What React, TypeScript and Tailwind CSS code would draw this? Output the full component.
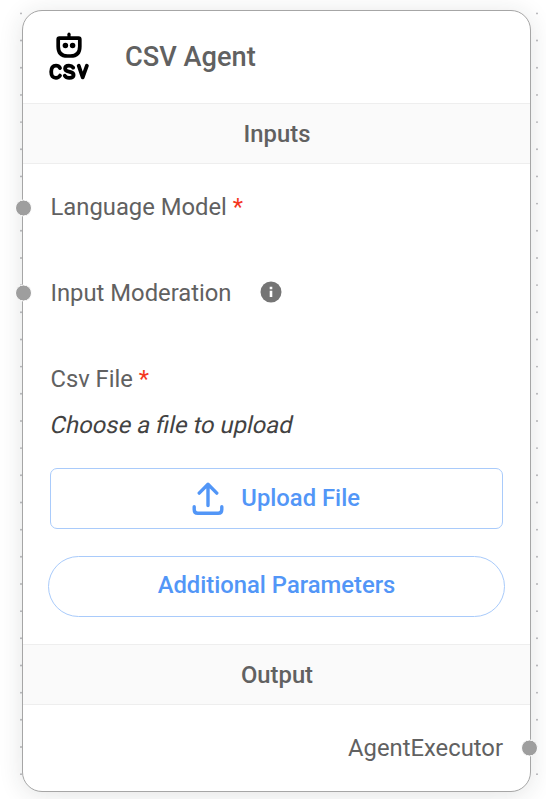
import React from "react";

const dotColumn = Array.from({ length: 29 }, (_, i) => i);

function Dots({ x }: { x: number }) {
  return (
    <g fill="#b4b4b8">
      {dotColumn.map((i) => (
        <circle key={i} cx={x} cy={13.4 + i * 27.17} r={0.95} />
      ))}
    </g>
  );
}

function Handle({ side }: { side: "left" | "right" }) {
  return (
    <span
      className={
        "absolute top-1/2 h-[17px] w-[17px] -translate-y-1/2 rounded-full border border-white bg-[#9e9e9e] " +
        (side === "left" ? "-left-[8px]" : "-right-[8px]")
      }
    />
  );
}

function SectionTitle({ children }: { children: React.ReactNode }) {
  return (
    <div className="flex h-[61px] shrink-0 items-center justify-center border-y border-[#eeeeee] bg-[#fafafa] pl-px text-[23.8px] font-medium text-[#616161]">
      {children}
    </div>
  );
}

function RobotCsvIcon() {
  return (
    <svg className="mb-[2px] h-[48px] w-[42px]" viewBox="0 0 42 48" fill="none" stroke="#000" strokeLinecap="round" strokeLinejoin="round">
      <path d="M21 2.2V6" strokeWidth="3.2" />
      <path d="M11.4 6.2H30.6Q31.8 6.2 31.8 7.4V14.5Q31.8 24 22.6 24H19.4Q10.2 24 10.2 14.5V7.4Q10.2 6.2 11.4 6.2Z" strokeWidth="3.7" />
      <circle cx="17.4" cy="13.6" r="2.75" fill="#000" stroke="none" />
      <circle cx="24.6" cy="13.6" r="2.75" fill="#000" stroke="none" />
      <path d="M12 36Q10.7 33.7 8 33.7Q3.2 33.7 3.2 39.8T8 45.8Q10.7 45.8 12 43.6" strokeWidth="3.8" />
      <path d="M25.2 35.6Q23.8 33.7 21 33.7Q17.1 33.7 17.1 36.5Q17.1 38.9 20.9 39.6Q25.6 40.4 25.6 42.9Q25.6 45.8 21.2 45.8Q18.1 45.8 16.8 43.7" strokeWidth="3.8" />
      <path d="M30.7 33.7L34.7 45.4L38.9 33.7" strokeWidth="3.8" />
    </svg>
  );
}

function InfoIcon() {
  return (
    <svg className="mb-[3px] ml-[27.5px] h-[24px] w-[24px]" viewBox="0 0 24 24">
      <circle cx="12" cy="12" r="10.5" fill="#757575" />
      <path d="M10.7 10.7h2.6v6.3h-2.6zM10.7 6.8h2.6v2.4h-2.6z" fill="#fff" />
    </svg>
  );
}

function UploadIcon() {
  return (
    <svg className="h-[34px] w-[32px]" viewBox="0 0 32 34" fill="none" stroke="#5296f7" strokeWidth="3.4" strokeLinecap="round" strokeLinejoin="round">
      <path d="M2.2 24.8V27.5Q2.2 31.3 5.8 31.3H26.2Q29.8 31.3 29.8 27.5V24.8" />
      <path d="M7.2 11.1L16 2.3L24.8 11.1M16 2.3V23.5" />
    </svg>
  );
}

export default function App() {
  return (
    <div className="relative h-[799px] w-[546px] overflow-hidden bg-white px-[22px] pt-[10px] font-['Roboto',sans-serif] text-[23.8px] leading-[34px] text-[#616161]">
      <svg className="absolute inset-0 h-full w-full" viewBox="0 0 546 799">
        <Dots x={21} />
        <Dots x={537} />
      </svg>
      <div className="relative flex h-[782px] w-[509px] flex-col rounded-[20px] border border-[#a6a6a6] bg-white shadow-[0_3px_24px_rgba(32,40,45,0.12)]">
        <div className="flex h-[92px] shrink-0 items-center pl-[25px]">
          <RobotCsvIcon />
          <h1 className="ml-[35px] text-[27.2px] font-medium">CSV Agent</h1>
        </div>
        <SectionTitle>Inputs</SectionTitle>
        <div className="relative mt-px flex h-[85px] shrink-0 items-center pl-[27.5px]">
          <Handle side="left" />
          <span className="mb-px">Language Model <span className="text-[#f4361e]">*</span></span>
        </div>
        <div className="relative flex h-[86px] shrink-0 items-center pl-[27.5px]">
          <Handle side="left" />
          <span className="mb-px">Input Moderation</span>
          <InfoIcon />
        </div>
        <div className="pt-[26px] pl-[27.4px]">
          <div>Csv File <span className="text-[#f4361e]">*</span></div>
          <div className="mt-[12px] w-fit origin-[0_22px] -skew-x-12 text-[#424242]">Choose a file to upload</div>
          <button className="mt-[26px] flex h-[61px] w-[453px] items-center justify-center gap-[17.5px] rounded-[7px] border border-[#a9cbfb] pr-[2px] font-medium text-[#5296f7]">
            <UploadIcon />
            <span className="mb-[2px]">Upload File</span>
          </button>
        </div>
        <button className="mx-[25px] mt-[27px] flex h-[61px] shrink-0 items-center justify-center rounded-full border border-[#a9cbfb] pb-[3px] font-medium text-[#5296f7]">
          Additional Parameters
        </button>
        <div className="mt-[27px]"><SectionTitle>Output</SectionTitle></div>
        <div className="relative flex h-[86px] shrink-0 items-center justify-end pr-[27px]">
          <Handle side="right" />
          AgentExecutor
        </div>
      </div>
    </div>
  );
}
